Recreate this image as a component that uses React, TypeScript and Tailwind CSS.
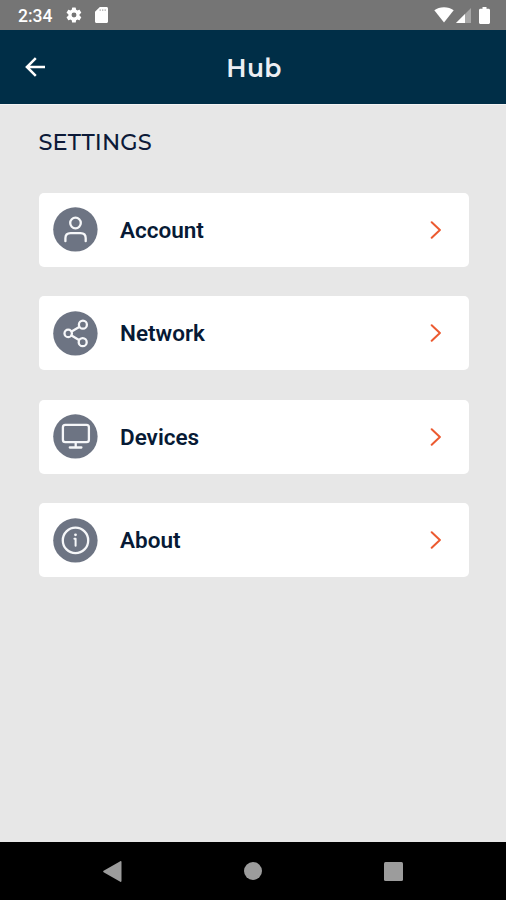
import type { ReactNode } from "react";

type Item = { label: string; icon: ReactNode };

const ITEMS: Item[] = [
  {
    label: "Account",
    icon: (
      <>
        <circle cx="22.5" cy="16" r="5.3" />
        <path d="M12.4 34.2v-3c0-3.400 1.800-5 5.200-5h9.900c3.400 0 5.200 1.600 5.200 5v3" />
      </>
    ),
  },
  {
    label: "Network",
    icon: (
      <>
        <circle cx="15.2" cy="22.400" r="3.700" />
        <circle cx="29.900" cy="13.700" r="4" />
        <circle cx="29.700" cy="31.200" r="4" />
        <path d="m18.600 20.400 7.600-4.500M18.500 24.400l7.500 4.600" />
      </>
    ),
  },
  {
    label: "Devices",
    icon: (
      <>
        <rect x="9.900" y="10.900" width="26" height="17.300" rx="2.400" />
        <path d="M22.700 28.200v5M16.800 33.500h11.600" />
      </>
    ),
  },
  {
    label: "About",
    icon: (
      <>
        <circle cx="22.500" cy="22.400" r="12.700" />
        <path d="M21.400 20.800h1.200V27.800" strokeWidth="2" />
        <circle cx="22.500" cy="16.800" r="1.400" fill="currentColor" stroke="none" />
      </>
    ),
  },
];

const headingCls = "font-['Montserrat','Inter',sans-serif]";

function StatusBar() {
  return (
    <div className="flex h-[30px] shrink-0 items-center bg-[#757575] pl-[18px] pr-[15px] text-white">
      <span className="w-[35px] pt-[2px] text-[17.500px] leading-5 font-medium whitespace-nowrap">2:34</span>
      <svg className="ml-[12px]" width="18" height="18" viewBox="0 0 24 24" fill="currentColor">
        <path d="M19.4 13a7.500 7.500 0 0 0 0-2l2.100-1.600c.2-.2.3-.5.1-.7l-2-3.400c-.1-.3-.4-.3-.7-.2l-2.400 1a7.300 7.300 0 0 0-1.700-1l-.4-2.600a.5.5 0 0 0-.5-.5h-4a.5.5 0 0 0-.5.5L9 5.100c-.6.2-1.200.6-1.700 1l-2.400-1c-.3-.1-.6 0-.7.2l-2 3.400c-.2.2-.1.5.1.7L4.500 11a7.500 7.500 0 0 0 0 2l-2.200 1.600c-.2.2-.3.5-.1.7l2 3.400c.1.3.4.3.7.2l2.400-1c.5.4 1.100.8 1.700 1l.4 2.600c0 .3.2.5.5.5h4c.3 0 .5-.2.5-.5l.4-2.600c.6-.2 1.200-.6 1.700-1l2.400 1c.3.1.6 0 .7-.2l2-3.400c.1-.2.1-.5-.1-.7zM12 15.300a3.300 3.300 0 1 1 0-6.600 3.300 3.300 0 0 1 0 6.600z" />
      </svg>
      <svg className="ml-[12px]" width="13" height="16" viewBox="0 0 13 16">
        <path d="M4.800 0h6.700C12.400 0 13 .6 13 1.500v13c0 .9-.6 1.500-1.500 1.500h-10C.6 16 0 15.400 0 14.500V4.800z" fill="currentColor" />
        <path d="M5.200 2.300v1.600M7.700 2.300v1.600M10.200 2.300v1.600" stroke="#bbb" strokeWidth="1.300" />
      </svg>
      <svg className="ml-auto" width="20" height="16" viewBox="0 0 20 16" fill="currentColor">
        <path d="M10 15.400.3 3.200C3 1.100 6.200.2 10 .2s7 .9 9.700 3z" />
      </svg>
      <svg className="ml-[2px]" width="15" height="15" viewBox="0 0 15 15">
        <path d="M15 0v15H0z" fill="#a6a6a6" />
        <path d="M9 6v9H0z" fill="currentColor" />
      </svg>
      <svg className="ml-[8px] mr-[1px]" width="11" height="17" viewBox="0 0 11 17" fill="currentColor">
        <path d="M3.500 0h4v1.700h2c.8 0 1.500.6 1.500 1.400v12.400c0 .8-.7 1.500-1.500 1.500h-8C.7 17 0 16.300 0 15.500V3.100c0-.8.7-1.400 1.500-1.400h2z" />
      </svg>
    </div>
  );
}

function SettingsRow({ item }: { item: Item }) {
  return (
    <button className="flex h-[74px] w-full items-center rounded-[5px] bg-white pl-[14.500px] pr-[28px]">
      <span className="flex size-[45px] shrink-0 items-center justify-center">
        <svg className="text-[#f6f7f9]" width="45" height="45" viewBox="0 0 45 45" fill="none" stroke="currentColor" strokeWidth="2.300" strokeLinecap="round" strokeLinejoin="round">
          <circle cx="22.400" cy="22.400" r="22.200" fill="#6d7483" stroke="none" />
          {item.icon}
        </svg>
      </span>
      <span className="ml-[22px] text-[22.500px] leading-7 font-semibold text-[#071a35]">{item.label}</span>
      <svg className="ml-auto" width="11" height="18" viewBox="0 0 11 18" fill="none" stroke="#ec5a30" strokeWidth="2" strokeLinecap="round" strokeLinejoin="round">
        <path d="m1.700 1.200 8.200 7.800-8.200 7.800" />
      </svg>
    </button>
  );
}

export default function App() {
  return (
    <div className="flex h-[900px] w-[506px] flex-col overflow-hidden bg-[#e7e7e7] font-['Roboto',sans-serif]">
      <StatusBar />
      <header className="grid h-[73.500px] shrink-0 grid-cols-[1fr_auto_1fr] items-center bg-[#002e47] pl-[25px] pr-[23px] text-white">
        <button className="w-fit">
          <svg width="21" height="20" viewBox="0 0 21 20" fill="none" stroke="currentColor" strokeWidth="2.500">
            <path d="M20 10H2M10.800 1.100 1.900 10l8.900 8.900" />
          </svg>
        </button>
        <h1 className={headingCls + " pt-[3px] text-[25px] leading-8 font-semibold tracking-[0.3px] text-[#eceef3]"}>Hub</h1>
      </header>

      <main className="flex flex-1 flex-col border-t border-[#f4f4f4] px-[38.500px] pt-[22px] pr-[37.500px]">
        <h2 className={headingCls + " h-[33px] text-[22.500px] leading-[30px] font-medium tracking-[0.150px] text-[#0c1a38]"}>SETTINGS</h2>
        <div className="mt-[33px] flex flex-col gap-[29.500px]">
          {ITEMS.map((item) => <SettingsRow key={item.label} item={item} />)}
        </div>
      </main>

      <nav className="flex h-[58px] shrink-0 items-center justify-between bg-black px-[103px] text-[#9c9c9c]">
        <svg width="19" height="21" viewBox="0 0 19 21" fill="currentColor">
          <path d="M17.300.3c.7-.4 1.200-.1 1.200.6v19.200c0 .7-.5 1-1.200.6L.6 11.200c-.6-.4-.6-1 0-1.400z" />
        </svg>
        <span className="size-[18px] rounded-full bg-[#9c9c9c]" />
        <span className="size-[19px] rounded-[1.500px] bg-[#9c9c9c]" />
      </nav>
    </div>
  );
}
